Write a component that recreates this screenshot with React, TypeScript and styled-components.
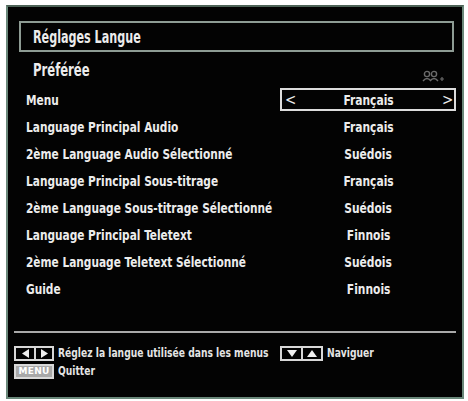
import React from "react";
import styled, { createGlobalStyle } from "styled-components";

const Global = createGlobalStyle`
  html, body { margin: 0; padding: 0; background: #ffffff; }
  body { width: 468px; height: 401px; overflow: hidden; }
  * { box-sizing: border-box; }
`;

const FONT = `"DejaVu Sans Condensed", "DejaVu Sans", sans-serif`;

const Panel = styled.div`
  margin: 5px 0 0 6px;
  width: 458px;
  height: 394px;
  background: #030303;
  border: 2px solid #6a887a;
  border-top-color: #4d6357;
  display: flex;
  flex-direction: column;
  padding: 14px 6px 0 6px;
  font-family: ${FONT};
  font-weight: 700;
  color: #ececec;
`;

const Squeeze = styled.span<{ $k: number; $origin?: string }>`
  display: inline-block;
  white-space: nowrap;
  transform: scaleX(${(p) => p.$k});
  transform-origin: ${(p) => p.$origin ?? "left"} center;
`;

const TitleBox = styled.div`
  margin: 0 2px 0 5px;
  height: 31px;
  border: 2px solid #8e9c94;
  display: flex;
  align-items: center;
  padding-left: 12px;
  font-size: 17px;
`;

const SubHeader = styled.div`
  margin-top: 8px;
  margin-bottom: 6px;
  height: 20px;
  display: flex;
  align-items: center;
  justify-content: space-between;
  padding-left: 19px;
  font-size: 17px;
`;

const Glyph = styled.svg`
  margin-right: 10px;
  margin-top: 12px;
`;

const Rows = styled.div`
  display: grid;
  grid-template-columns: minmax(0, 1fr) 176px;
  grid-auto-rows: 27px;
  padding-left: 12px;
`;

const Label = styled.div`
  display: flex;
  align-items: center;
  font-size: 14px;
  min-width: 0;
`;

const Value = styled.div<{ $selected?: boolean }>`
  display: flex;
  align-items: center;
  justify-content: ${(p) => (p.$selected ? "space-between" : "center")};
  font-size: 14px;
  margin: 2px 0;
  padding: 0 2px 0 3px;
  border: 2px solid ${(p) => (p.$selected ? "#dcdcdc" : "transparent")};
`;

const Arrow = styled.span`
  font-size: 15px;
  width: 10px;
  text-align: center;
  font-weight: 400;
`;

const Separator = styled.div`
  margin-top: 29px;
  height: 2px;
  background: #a9a9a9;
`;

const Footer = styled.div`
  margin-top: 11px;
  display: flex;
  flex-direction: column;
`;

const FooterRow = styled.div`
  height: 18px;
  display: flex;
  align-items: center;
  font-size: 12px;
  color: #e4e4e4;
`;

const Hint = styled.span<{ $w?: number }>`
  margin-left: 4px;
  width: ${(p) => (p.$w ? `${p.$w}px` : "auto")};
  flex: none;
`;

const KeyGroup = styled.div`
  display: flex;
  align-items: stretch;
  height: 15px;
  border: 2px solid #d8d8d8;
  flex: none;
`;

const KeyCell = styled.div<{ $w: number; $divider?: boolean }>`
  width: ${(p) => p.$w}px;
  display: flex;
  align-items: center;
  justify-content: center;
  border-left: ${(p) => (p.$divider ? "2px solid #d8d8d8" : "none")};
`;

const MenuKey = styled.div`
  width: 40px;
  height: 15px;
  border: 2px solid #d8d8d8;
  background: #a8a8a8;
  display: flex;
  align-items: center;
  justify-content: center;
  font-size: 9px;
  letter-spacing: 0.3px;
  color: #ffffff;
  font-family: "DejaVu Sans", sans-serif;
  font-weight: 700;
  flex: none;
`;

const rows: [string, string][] = [
  ["Menu", "Français"],
  ["Language Principal Audio", "Français"],
  ["2ème Language Audio Sélectionné", "Suédois"],
  ["Language Principal Sous-titrage", "Français"],
  ["2ème Language Sous-titrage Sélectionné", "Suédois"],
  ["Language Principal Teletext", "Finnois"],
  ["2ème Language Teletext Sélectionné", "Suédois"],
  ["Guide", "Finnois"],
];

const Tri = ({ dir }: { dir: "l" | "r" | "u" | "d" }) => {
  const horiz = dir === "l" || dir === "r";
  const pts =
    dir === "l"
      ? "9,1 9,10 2,5.5"
      : dir === "r"
      ? "2,1 2,10 9,5.5"
      : dir === "u"
      ? "1,9 11,9 6,2"
      : "1,2 11,2 6,9";
  return (
    <svg width={horiz ? 11 : 12} height={11} viewBox={horiz ? "0 0 11 11" : "0 0 12 11"}>
      <polygon points={pts} fill="#f0f0f0" />
    </svg>
  );
};

const LK = 0.84;
const VK = 0.85;
const TK = 0.73;
const FK = 0.85;

export default function App() {
  return (
    <>
      <Global />
      <Panel>
        <TitleBox>
          <Squeeze $k={TK}>Réglages Langue</Squeeze>
        </TitleBox>
        <SubHeader>
          <Squeeze $k={0.76}>Préférée</Squeeze>
          <Glyph width="24" height="12" viewBox="0 0 24 12">
            <circle cx="5" cy="4" r="2.6" fill="none" stroke="#6b6b6b" strokeWidth="1.4" />
            <circle cx="12" cy="4" r="2.6" fill="none" stroke="#6b6b6b" strokeWidth="1.4" />
            <path d="M1 11 Q5 6 9 11 M8 11 Q12 6 16 11" fill="none" stroke="#6b6b6b" strokeWidth="1.4" />
            <path d="M18 9 H22 M20 7 V11" stroke="#6b6b6b" strokeWidth="1.2" />
          </Glyph>
        </SubHeader>
        <Rows>
          {rows.map(([l, v], i) => (
            <React.Fragment key={l}>
              <Label>
                <Squeeze $k={LK}>{l}</Squeeze>
              </Label>
              {i === 0 ? (
                <Value $selected>
                  <Arrow>&lt;</Arrow>
                  <Squeeze $k={VK} $origin="center">{v}</Squeeze>
                  <Arrow>&gt;</Arrow>
                </Value>
              ) : (
                <Value>
                  <Squeeze $k={VK} $origin="center">{v}</Squeeze>
                </Value>
              )}
            </React.Fragment>
          ))}
        </Rows>
        <Separator />
        <Footer>
          <FooterRow>
            <KeyGroup>
              <KeyCell $w={18}>
                <Tri dir="l" />
              </KeyCell>
              <KeyCell $w={18} $divider>
                <Tri dir="r" />
              </KeyCell>
            </KeyGroup>
            <Hint $w={222}>
              <Squeeze $k={FK}>Réglez la langue utilisée dans les menus</Squeeze>
            </Hint>
            <KeyGroup>
              <KeyCell $w={19}>
                <Tri dir="d" />
              </KeyCell>
              <KeyCell $w={20} $divider>
                <Tri dir="u" />
              </KeyCell>
            </KeyGroup>
            <Hint>
              <Squeeze $k={FK}>Naviguer</Squeeze>
            </Hint>
          </FooterRow>
          <FooterRow>
            <MenuKey>MENU</MenuKey>
            <Hint>
              <Squeeze $k={FK}>Quitter</Squeeze>
            </Hint>
          </FooterRow>
        </Footer>
      </Panel>
    </>
  );
}
